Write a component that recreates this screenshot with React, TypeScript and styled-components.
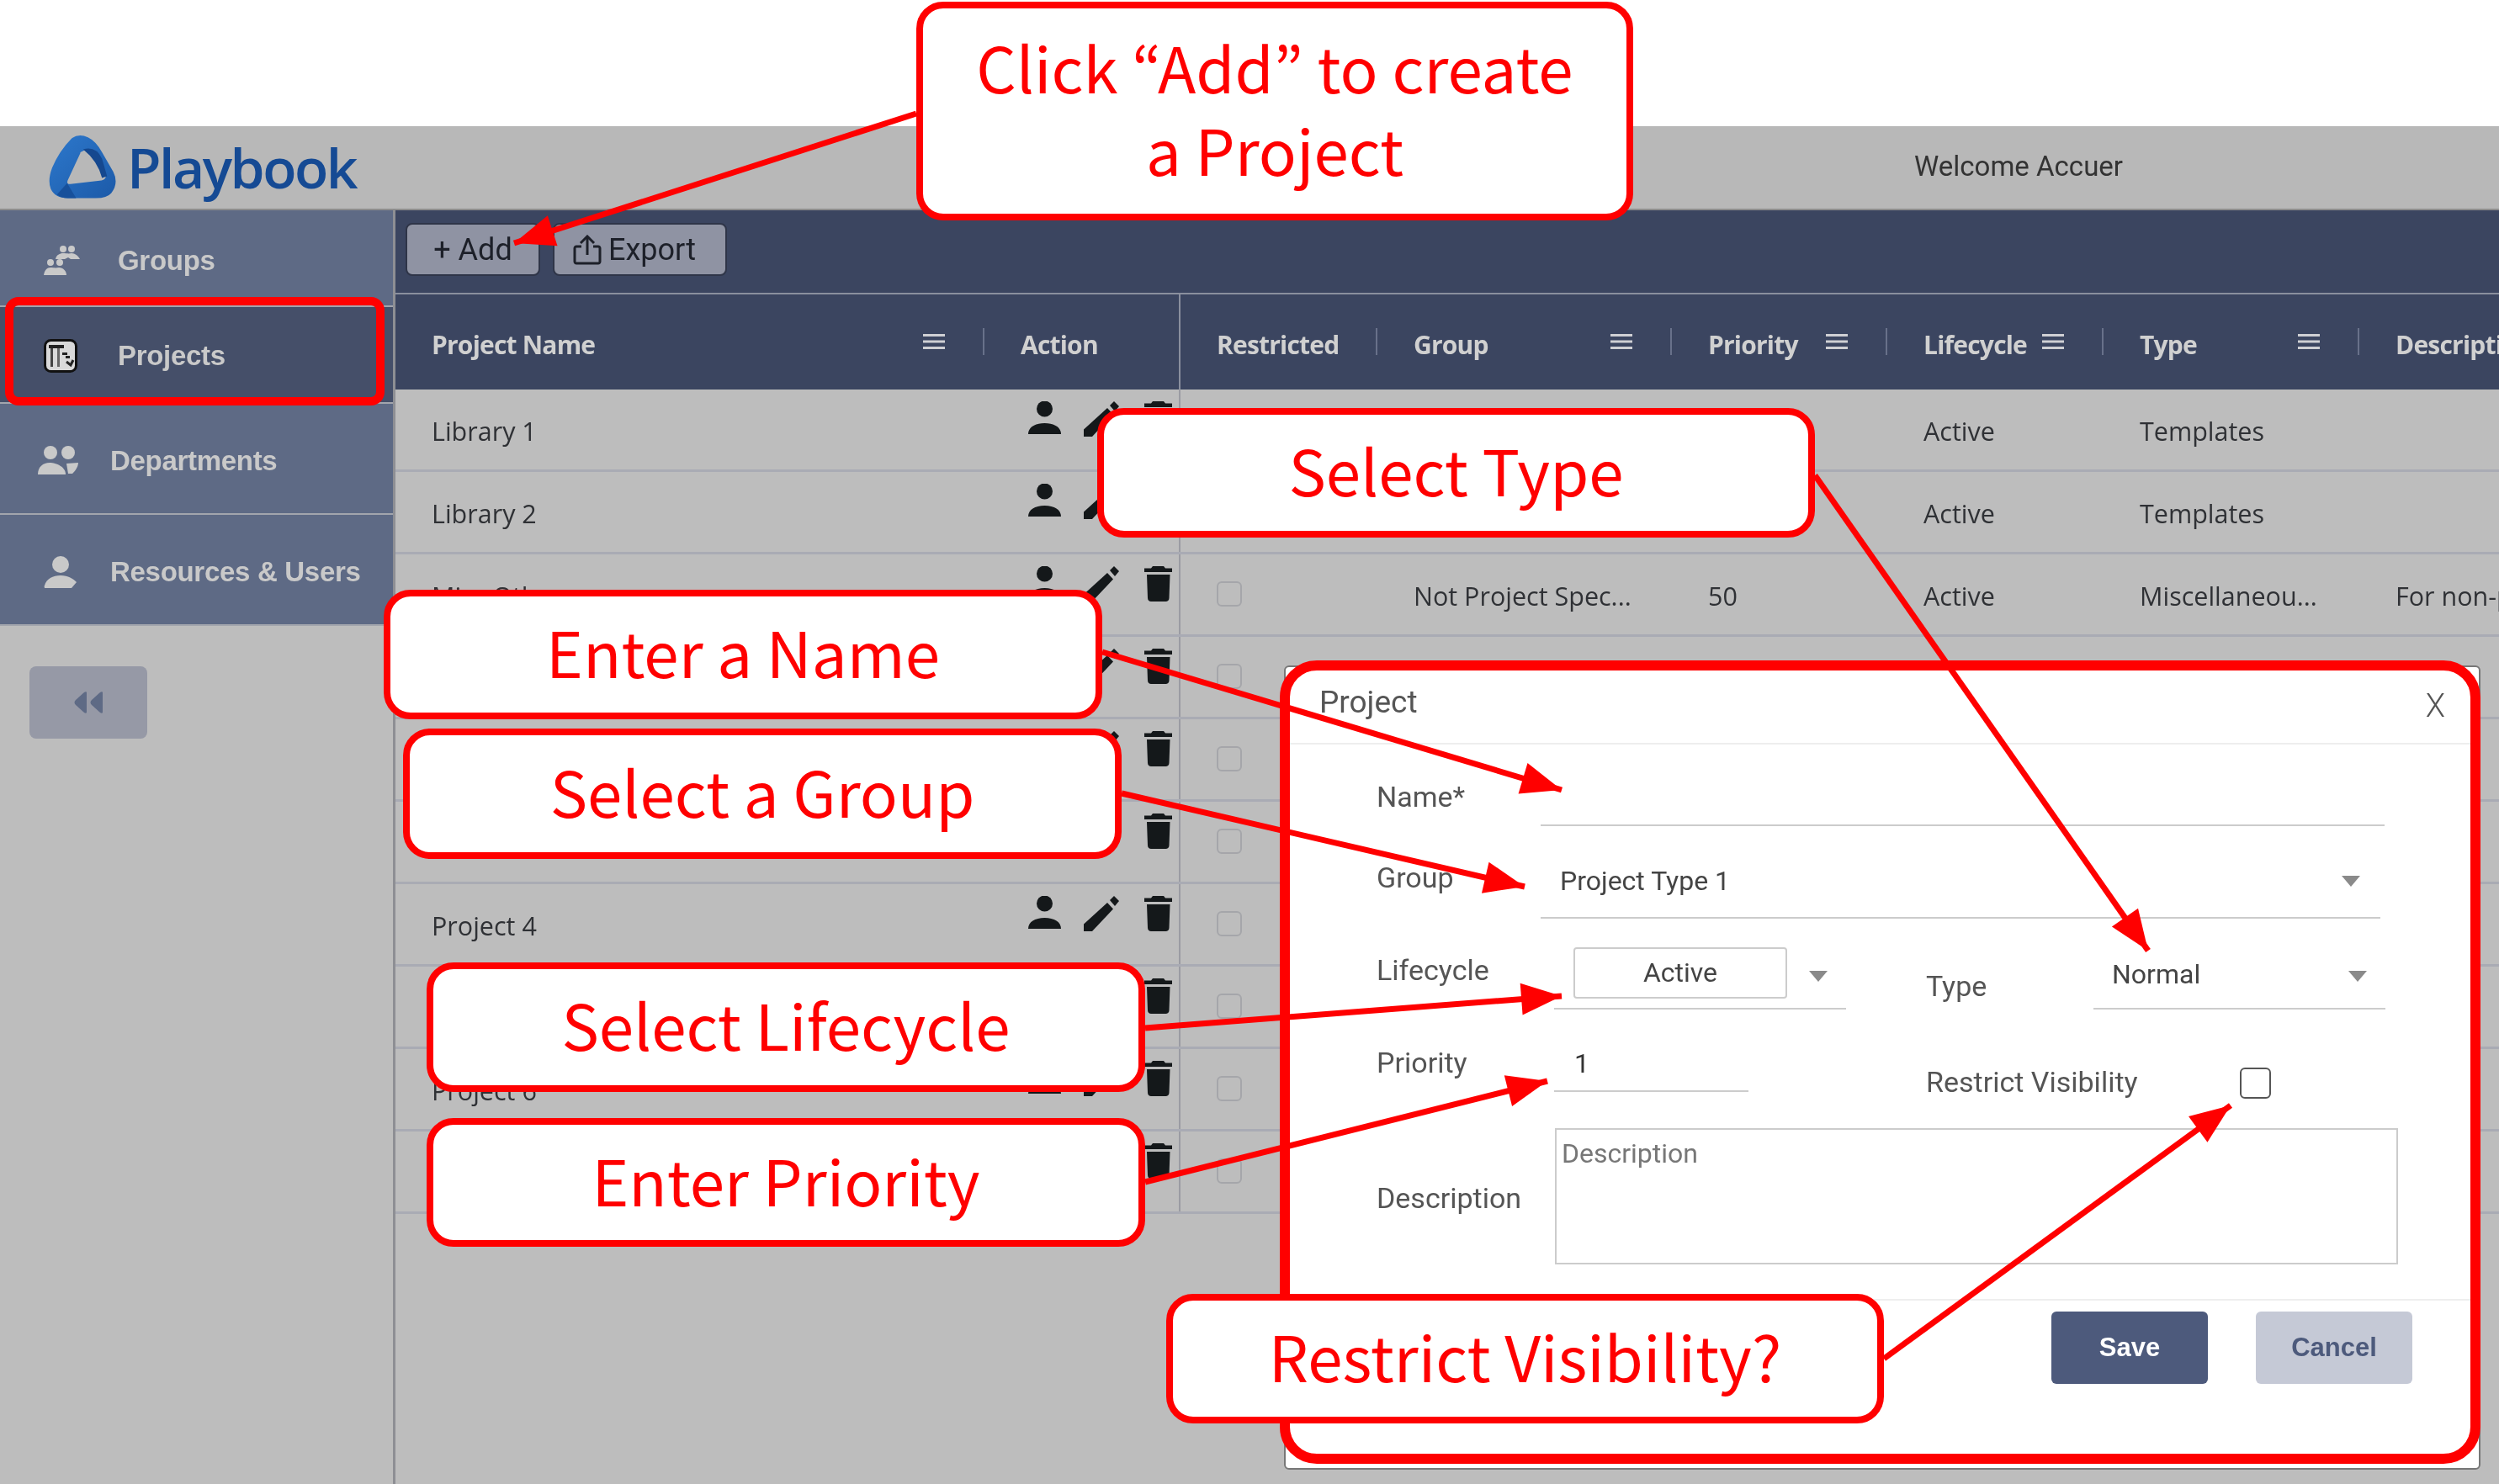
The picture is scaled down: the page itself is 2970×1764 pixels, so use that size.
import React from 'react'
import styled, { createGlobalStyle } from 'styled-components'

const GlobalStyle = createGlobalStyle`
  html, body {
    margin: 0;
    padding: 0;
    background: #fff;
  }
`

const COLUMNS = '700px 233px 234px 350px 256px 257px 304px 1fr'
const OPEN = '"Open Sans", "Noto Sans", sans-serif'
const ROBOTO = 'Roboto, "Liberation Sans", sans-serif'
const ARIAL = '"Liberation Sans", Arial, sans-serif'

interface Project {
  name: string
  group?: string
  priority?: string
  lifecycle?: string
  type?: string
  description?: string
}

const projects: Project[] = [
  { name: 'Library 1', lifecycle: 'Active', type: 'Templates' },
  { name: 'Library 2', lifecycle: 'Active', type: 'Templates' },
  {
    name: 'Misc Other',
    group: 'Not Project Spec...',
    priority: '50',
    lifecycle: 'Active',
    type: 'Miscellaneou...',
    description: 'For non-project work',
  },
  { name: 'Project 1' },
  { name: 'Project 2' },
  { name: 'Project 3' },
  { name: 'Project 4' },
  { name: 'Project 5' },
  { name: 'Project 6' },
  { name: 'Project 7' },
]

const arrows = [
  { from: [1089, 135], to: [611, 289] },
  { from: [1310, 775], to: [1856, 939] },
  { from: [1333, 943], to: [1812, 1054] },
  { from: [1361, 1222], to: [1856, 1184] },
  { from: [1361, 1405], to: [1839, 1285] },
  { from: [2157, 565], to: [2553, 1130] },
  { from: [2239, 1615], to: [2651, 1314] },
]

const headPoints = (from: number[], to: number[]): string => {
  const angle = Math.atan2(to[1] - from[1], to[0] - from[0])
  const baseX = to[0] - Math.cos(angle) * 48
  const baseY = to[1] - Math.sin(angle) * 48
  const dx = Math.sin(angle) * 19
  const dy = Math.cos(angle) * 19
  return `${to[0]},${to[1]} ${baseX + dx},${baseY - dy} ${baseX - dx},${baseY + dy}`
}

const PersonIcon = (): JSX.Element => (
  <ActionSvg viewBox="0 0 39 40" width="39" height="40" fill="#14181a">
    <circle cx="19.5" cy="9" r="9.5" />
    <path d="M0 39c0-8 8-13 19.5-13S39 31 39 39z" />
  </ActionSvg>
)

const PenIcon = (): JSX.Element => (
  <ActionSvg viewBox="0 0 42 42" width="42" height="42" fill="#14181a">
    <path d="M0 42v-8.500L28 8l7 7.500L10 42z" />
    <path d="M31 5l5-5 6 6-5 6z" />
  </ActionSvg>
)

const TrashIcon = (): JSX.Element => (
  <TrashSvg viewBox="0 0 33 42" width="33" height="42" fill="#14181a">
    <path d="M10 0h13l2 2.500h8v4.500H0V2.500h8z" />
    <path d="M3 10h27.500l-1 28c0 2.500-2 4-4 4H8c-2 0-4-1.500-4-4z" />
  </TrashSvg>
)

const MenuIcon = (): JSX.Element => (
  <MenuSvg viewBox="0 0 26 20" width="26" height="20" fill="#cfd0d4">
    <rect x="0" y="1" width="26" height="3" />
    <rect x="0" y="8.500" width="26" height="3" />
    <rect x="0" y="16" width="26" height="3" />
  </MenuSvg>
)

const LogoMark = (): JSX.Element => (
  <svg viewBox="80 30 245 232" width="82" height="78">
    <defs>
      <linearGradient id="logoA" x1="0" y1="0" x2="1" y2="1">
        <stop offset="0" stopColor="#2d78cc" />
        <stop offset="1" stopColor="#1c5aa8" />
      </linearGradient>
    </defs>
    <path
      fill="url(#logoA)"
      fillRule="evenodd"
      d="M165 45Q190 28 222 42Q250 55 272 95L312 165Q332 205 305 240Q290 258 250 258L150 258Q105 258 90 225Q78 195 95 150Q120 90 165 45ZM195 98L150 195Q145 210 160 208L270 195Q295 190 280 160L245 100Q225 78 195 95Z"
    />
    <path fill="#15488f" d="M205 85Q250 72 272 118L290 180L272 186Q255 125 205 85Z" />
    <path fill="#17509b" d="M148 205L180 258L150 258Q128 258 112 245Z" />
  </svg>
)

const GroupsIcon = (): JSX.Element => (
  <svg viewBox="0 0 44 38" width="44" height="38" fill="#c9c9c9">
    <circle cx="23" cy="5" r="4" />
    <circle cx="33" cy="5" r="4" />
    <path d="M14 17c1-5 5-7 9-7s6 1 10 0c4 0 8 3 10 7H32l-3-2-4 2z" />
    <circle cx="8" cy="21" r="4" />
    <circle cx="19" cy="21" r="4" />
    <path d="M0 36c1-6 4-9 8-9s5 1 10 0c5 0 9 4 9 9H0z" />
  </svg>
)

const ProjectsIcon = (): JSX.Element => (
  <svg viewBox="0 0 40 40" width="40" height="40">
    <rect x="1.500" y="1.500" width="37" height="37" rx="7" fill="#d9d9d9" stroke="#111" strokeWidth="3" />
    <rect x="6" y="7" width="18" height="4" fill="#222" />
    <rect x="8" y="11" width="3" height="22" fill="#444" />
    <rect x="16" y="11" width="3" height="22" fill="#666" />
    <rect x="22" y="16" width="6" height="3" fill="#222" />
    <rect x="26" y="20" width="5" height="3" fill="#222" />
    <path d="M27 27l5 4 3-6" stroke="#222" strokeWidth="3" fill="none" />
  </svg>
)

const DepartmentsIcon = (): JSX.Element => (
  <svg viewBox="0 0 48 35" width="48" height="35" fill="#c9c9c9">
    <circle cx="15" cy="8" r="8" />
    <circle cx="36" cy="8" r="8" />
    <path d="M0 34c0-9 6-14 14-14s19 5 19 14z" />
    <path d="M36 33l-2-12 14-1c0 5-4 10-7 13z" />
  </svg>
)

const ResourcesIcon = (): JSX.Element => (
  <svg viewBox="0 0 40 38" width="40" height="38" fill="#c9c9c9">
    <circle cx="20" cy="10" r="10" />
    <path d="M1 38c0-1-1-2 0-3 2-8 10-12 19-12s15 4 19 8l-6 7z" />
  </svg>
)

const ExportIcon = (): JSX.Element => (
  <svg viewBox="0 0 34 36" width="34" height="36" fill="none" stroke="#1d2029" strokeWidth="3">
    <path d="M10 14H4c-1 0-2 1-2 2v16c0 1 1 2 2 2h26c1 0 2-1 2-2V16c0-1-1-2-2-2h-6" />
    <path d="M17 24V3" />
    <path d="M9 10l8-8 8 8" />
  </svg>
)

const CollapseIcon = (): JSX.Element => (
  <svg viewBox="0 0 34 26" width="34" height="26" fill="#5e6a85">
    <path d="M15 2c0-2-1-2-3-1L2 10c-2 2-2 4 0 6l10 9c2 1 3 1 3-1z" />
    <path d="M34 2c0-2-1-2-3-1L21 10c-2 2-2 4 0 6l10 9c2 1 3 1 3-1z" />
  </svg>
)

const App = (): JSX.Element => (
  <Page>
    <GlobalStyle />
    <TopBand />
    <Dimmed>
      <Header>
        <Logo>
          <LogoMark />
          <LogoText>Playbook</LogoText>
        </Logo>
        <Welcome>Welcome Accuer</Welcome>
      </Header>

      <Body>
        <Sidebar>
          <NavItem $h={115} $inset={52} $gap={44} $top={6}>
            <GroupsIcon />
            <NavText>Groups</NavText>
          </NavItem>
          <NavItem $h={115} $inset={52} $gap={48} $top={2} $active>
            <ProjectsIcon />
            <NavText>Projects</NavText>
          </NavItem>
          <NavItem $h={132} $inset={45} $gap={38} $top={5}>
            <DepartmentsIcon />
            <NavText>Departments</NavText>
          </NavItem>
          <NavItem $h={132} $inset={52} $gap={39} $top={5}>
            <ResourcesIcon />
            <NavText>Resources &amp; Users</NavText>
          </NavItem>
          <CollapseButton>
            <CollapseIcon />
          </CollapseButton>
        </Sidebar>

        <Main>
          <Toolbar>
            <ToolButton $w={160} $end={0}>
              + Add
            </ToolButton>
            <ToolButton $w={207} $end={13}>
              <ExportIcon />
              Export
            </ToolButton>
          </Toolbar>

          <HeadRow>
            <HeadCell $divider>
              Project Name
              <MenuIcon />
            </HeadCell>
            <HeadCell $pinned>Action</HeadCell>
            <HeadCell $divider>Restricted</HeadCell>
            <HeadCell $divider>
              Group
              <MenuIcon />
            </HeadCell>
            <HeadCell $divider>
              Priority
              <MenuIcon />
            </HeadCell>
            <HeadCell $divider>
              Lifecycle
              <MenuIcon />
            </HeadCell>
            <HeadCell $divider>
              Type
              <MenuIcon />
            </HeadCell>
            <HeadCell>Description</HeadCell>
          </HeadRow>

          {projects.map((project) => (
            <Row key={project.name}>
              <Cell>{project.name}</Cell>
              <ActionCell>
                <PersonIcon />
                <PenIcon />
                <TrashIcon />
              </ActionCell>
              <Cell>
                <RowCheck />
              </Cell>
              <Cell>{project.group}</Cell>
              <Cell>{project.priority}</Cell>
              <Cell>{project.lifecycle}</Cell>
              <Cell>{project.type}</Cell>
              <Cell>{project.description}</Cell>
            </Row>
          ))}
        </Main>
      </Body>

      <Modal>
        <ModalTitle>
          Project
          <CloseMark>X</CloseMark>
        </ModalTitle>
        <FormRow $h={99}>
          <FieldLabel $w={195} $top={40}>
            Name*
          </FieldLabel>
          <LineField $w={1003} />
        </FormRow>
        <FormRow $h={110}>
          <FieldLabel $w={195} $top={37}>
            Group
          </FieldLabel>
          <SelectField $w={998} $pad={23} $end={24}>
            <SelectText>Project Type 1</SelectText>
            <Caret />
          </SelectField>
        </FormRow>
        <FormRow $h={109}>
          <FieldLabel $w={211} $top={37}>
            Lifecycle
          </FieldLabel>
          <SelectField $w={347} $pad={23} $end={22} $mb={12}>
            <ActiveBox>Active</ActiveBox>
            <Caret />
          </SelectField>
          <FieldLabel $w={199} $top={56} $left={95}>
            Type
          </FieldLabel>
          <SelectField $w={347} $pad={22} $end={22} $mb={12}>
            <NormalText>Normal</NormalText>
            <Caret />
          </SelectField>
        </FormRow>
        <FormRow $h={138}>
          <FieldLabel $w={211} $top={38}>
            Priority
          </FieldLabel>
          <PriorityField>1</PriorityField>
          <FieldLabel $w={373} $top={61} $left={211}>
            Restrict Visibility
          </FieldLabel>
          <VisibilityCheck />
        </FormRow>
        <FormRow $h={203}>
          <FieldLabel $w={212} $top={61}>
            Description
          </FieldLabel>
          <DescriptionBox>Description</DescriptionBox>
        </FormRow>
        <ModalFooter>
          <SaveButton>Save</SaveButton>
          <CancelButton>Cancel</CancelButton>
        </ModalFooter>
      </Modal>
    </Dimmed>

    <ModalFrame />
    <NavFrame />

    <ArrowLayer viewBox="0 0 2970 1764" width="2970" height="1764">
      {arrows.map(({ from, to }) => (
        <g key={to.join()}>
          <line x1={from[0]} y1={from[1]} x2={to[0]} y2={to[1]} stroke="#f00" strokeWidth="7" />
          <polygon points={headPoints(from, to)} fill="#f00" />
        </g>
      ))}
    </ArrowLayer>

    <Callout $x={1089} $y={2} $w={852} $h={260}>
      Click “Add” to create
      <br />a Project
    </Callout>
    <Callout $x={1304} $y={485} $w={853} $h={154}>
      Select Type
    </Callout>
    <Callout $x={456} $y={701} $w={854} $h={154}>
      Enter a Name
    </Callout>
    <Callout $x={479} $y={866} $w={854} $h={155}>
      Select a Group
    </Callout>
    <Callout $x={507} $y={1144} $w={854} $h={154}>
      Select Lifecycle
    </Callout>
    <Callout $x={507} $y={1329} $w={854} $h={153}>
      Enter Priority
    </Callout>
    <Callout $x={1386} $y={1538} $w={853} $h={154}>
      Restrict Visibility?
    </Callout>
  </Page>
)

const Page = styled.div`
  position: relative;
  width: 2970px;
  height: 1764px;
  overflow: hidden;
  background: #fff;
`

const TopBand = styled.div`
  height: 150px;
  background: #fff;
`

const Dimmed = styled.div`
  position: relative;
  height: 1614px;
  background: #bdbdbd;
  filter: blur(0.7px);
`

const Header = styled.header`
  display: flex;
  align-items: center;
  justify-content: space-between;
  box-sizing: border-box;
  height: 100px;
  padding: 0 447px 3px 57px;
  background: #b8b8b8;
  border-bottom: 2px solid #8d8d8d;
`

const Logo = styled.div`
  display: flex;
  align-items: center;
  gap: 12px;
`

const LogoText = styled.span`
  font-family: ${OPEN};
  font-size: 66px;
  font-weight: 600;
  letter-spacing: -2.5px;
  line-height: 1;
  color: #154a94;
`

const Welcome = styled.span`
  font-family: ${ROBOTO};
  font-size: 33px;
  color: #333;
`

const Body = styled.div`
  display: flex;
  height: 1514px;
`

const Sidebar = styled.nav`
  box-sizing: border-box;
  flex: 0 0 470px;
  border-right: 3px solid #8e8f94;
`

const NavItem = styled.div<{ $h: number; $inset: number; $gap: number; $top: number; $active?: boolean }>`
  display: flex;
  align-items: center;
  box-sizing: border-box;
  height: ${(p) => p.$h}px;
  padding: ${(p) => p.$top}px 0 0 ${(p) => p.$inset}px;
  gap: ${(p) => p.$gap}px;
  background: ${(p) => (p.$active ? '#454f69' : '#5e6a85')};
  border-bottom: 2px solid #a2a5ad;
`

const NavText = styled.span`
  font-family: ${ARIAL};
  font-size: 33px;
  font-weight: 700;
  letter-spacing: -0.3px;
  color: #c9c9c9;
`

const CollapseButton = styled.div`
  display: flex;
  align-items: center;
  justify-content: center;
  width: 140px;
  height: 86px;
  margin: 48px 0 0 35px;
  border-radius: 8px;
  background: #9699a6;
`

const Main = styled.main`
  flex: 1;
  min-width: 0;
  overflow: hidden;
`

const Toolbar = styled.div`
  display: flex;
  align-items: flex-start;
  gap: 15px;
  box-sizing: border-box;
  height: 100px;
  padding: 15px 0 0 12px;
  background: #3b4560;
  border-bottom: 2px solid #8a8f9e;
`

const ToolButton = styled.div<{ $w: number; $end: number }>`
  display: flex;
  align-items: center;
  justify-content: center;
  gap: 8px;
  box-sizing: border-box;
  width: ${(p) => p.$w}px;
  height: 63px;
  padding-right: ${(p) => p.$end}px;
  border: 2px solid #2f3548;
  border-radius: 8px;
  background: #8f93a3;
  font-family: ${ROBOTO};
  font-size: 36px;
  color: #1d2029;
`

const HeadRow = styled.div`
  display: grid;
  grid-template-columns: ${COLUMNS};
  height: 113px;
  background: #3b4560;
  font-family: ${OPEN};
  font-size: 30px;
  font-weight: 700;
  letter-spacing: -0.8px;
  color: #d0d0d0;
`

const HeadCell = styled.div<{ $divider?: boolean; $pinned?: boolean }>`
  position: relative;
  display: flex;
  align-items: center;
  justify-content: space-between;
  box-sizing: border-box;
  padding: 6px 47px 0 43px;
  white-space: nowrap;
  border-right: ${(p) => (p.$pinned ? '2px solid #8a8f9e' : '0')};
  ${(p) =>
    p.$divider &&
    `&::after {
      content: '';
      position: absolute;
      right: 0;
      top: 40px;
      height: 32px;
      border-right: 2px solid #68718a;
    }`}
`

const MenuSvg = styled.svg`
  flex: none;
  margin-top: -8px;
`

const Row = styled.div`
  display: grid;
  grid-template-columns: ${COLUMNS};
  box-sizing: border-box;
  height: 98px;
  border-bottom: 3px solid #a9abb4;
  font-family: ${OPEN};
  font-size: 30.5px;
  color: #2f3135;
`

const Cell = styled.div`
  display: flex;
  align-items: center;
  padding: 3px 0 0 43px;
  white-space: nowrap;
`

const ActionCell = styled.div`
  display: flex;
  align-items: flex-start;
  gap: 27px;
  padding: 14px 0 0 52px;
  border-right: 2px solid #9b9ca3;
`

const ActionSvg = styled.svg`
  flex: none;
`

const TrashSvg = styled(ActionSvg)`
  margin-left: 3px;
`

const RowCheck = styled.span`
  box-sizing: border-box;
  width: 30px;
  height: 30px;
  margin-top: -5px;
  border: 2px solid #a5a6aa;
  border-radius: 6px;
`

const Modal = styled.div`
  position: absolute;
  left: 1526px;
  top: 641px;
  box-sizing: border-box;
  width: 1422px;
  height: 956px;
  border: 2px solid #777;
  border-radius: 6px;
  background: #fff;
  font-family: ${ROBOTO};
  color: #555;
`

const ModalTitle = styled.div`
  display: flex;
  justify-content: space-between;
  box-sizing: border-box;
  height: 92px;
  padding: 18px 40px 0 40px;
  border-bottom: 2px solid #eee;
  font-size: 37px;
  line-height: 48px;
`

const CloseMark = styled.span`
  margin-top: 4px;
  font-size: 38px;
  font-weight: 300;
`

const FormRow = styled.div<{ $h: number }>`
  display: flex;
  align-items: flex-start;
  height: ${(p) => p.$h}px;
  padding-left: 108px;
`

const FieldLabel = styled.label<{ $w: number; $top: number; $left?: number }>`
  flex: none;
  box-sizing: border-box;
  width: ${(p) => p.$w}px;
  margin-top: ${(p) => p.$top}px;
  margin-left: ${(p) => p.$left ?? 0}px;
  font-size: 34px;
  line-height: 44px;
  white-space: nowrap;
`

const LineField = styled.div<{ $w: number }>`
  box-sizing: border-box;
  width: ${(p) => p.$w}px;
  height: 97px;
  border-bottom: 2px solid #ccc;
`

const SelectField = styled.div<{ $w: number; $pad: number; $end: number; $mb?: number }>`
  display: flex;
  align-items: center;
  justify-content: space-between;
  box-sizing: border-box;
  flex: none;
  width: ${(p) => p.$w}px;
  height: ${(p) => 108 - (p.$mb ?? 0)}px;
  margin-top: ${(p) => (p.$mb ? 10 : 0)}px;
  padding: ${(p) => (p.$mb ? '18px' : '20px')} ${(p) => p.$end}px 0 ${(p) => p.$pad}px;
  border-bottom: 2px solid #ccc;
`

const SelectText = styled.span`
  font-size: 32px;
  color: #444;
`

const NormalText = styled(SelectText)`
  margin-top: -4px;
`

const Caret = styled.span`
  flex: none;
  width: 0;
  height: 0;
  border-left: 11px solid transparent;
  border-right: 11px solid transparent;
  border-top: 13px solid #8a8a8a;
`

const ActiveBox = styled.div`
  display: flex;
  align-items: center;
  justify-content: center;
  box-sizing: border-box;
  width: 254px;
  height: 61px;
  margin-top: -8px;
  border: 2px solid #ccc;
  border-radius: 4px;
  font-size: 32px;
  color: #444;
`

const PriorityField = styled.div`
  flex: none;
  box-sizing: border-box;
  width: 231px;
  height: 95px;
  padding: 39px 0 0 24px;
  border-bottom: 2px solid #ccc;
  font-size: 32px;
  line-height: 44px;
  color: #333;
`

const VisibilityCheck = styled.span`
  flex: none;
  box-sizing: border-box;
  width: 37px;
  height: 37px;
  margin-top: 66px;
  border: 2px solid #555;
  border-radius: 6px;
`

const DescriptionBox = styled.div`
  box-sizing: border-box;
  width: 1002px;
  height: 162px;
  padding: 6px;
  border: 2px solid #ccc;
  font-size: 32px;
  line-height: 44px;
  color: #777;
`

const ModalFooter = styled.div`
  display: flex;
  justify-content: flex-end;
  gap: 57px;
  padding: 13px 79px 0 0;
  border-top: 2px solid #eee;
`

const SaveButton = styled.div`
  display: flex;
  align-items: center;
  justify-content: center;
  width: 186px;
  height: 86px;
  border-radius: 6px;
  background: #4d5a7c;
  font-family: ${ARIAL};
  font-size: 31px;
  font-weight: 700;
  color: #fff;
`

const CancelButton = styled(SaveButton)`
  background: #c5c9d6;
  color: #4d5a7c;
`

const ModalFrame = styled.div`
  position: absolute;
  left: 1521px;
  top: 785px;
  box-sizing: border-box;
  width: 1427px;
  height: 955px;
  border: 12px solid #f00;
  border-radius: 44px;
`

const NavFrame = styled.div`
  position: absolute;
  left: 6px;
  top: 353px;
  box-sizing: border-box;
  width: 451px;
  height: 129px;
  border: 10px solid #f00;
  border-radius: 16px;
`

const ArrowLayer = styled.svg`
  position: absolute;
  left: 0;
  top: 0;
`

const Callout = styled.div<{ $x: number; $y: number; $w: number; $h: number }>`
  position: absolute;
  left: ${(p) => p.$x}px;
  top: ${(p) => p.$y}px;
  display: flex;
  align-items: center;
  justify-content: center;
  box-sizing: border-box;
  width: ${(p) => p.$w}px;
  height: ${(p) => p.$h}px;
  padding-bottom: 8px;
  border: 8px solid #f00;
  border-radius: 32px;
  background: #fff;
  font-family: 'Noto Sans CJK JP', 'Noto Sans', sans-serif;
  font-size: 74.5px;
  line-height: 98px;
  text-align: center;
  color: #f00;
`

export default App
